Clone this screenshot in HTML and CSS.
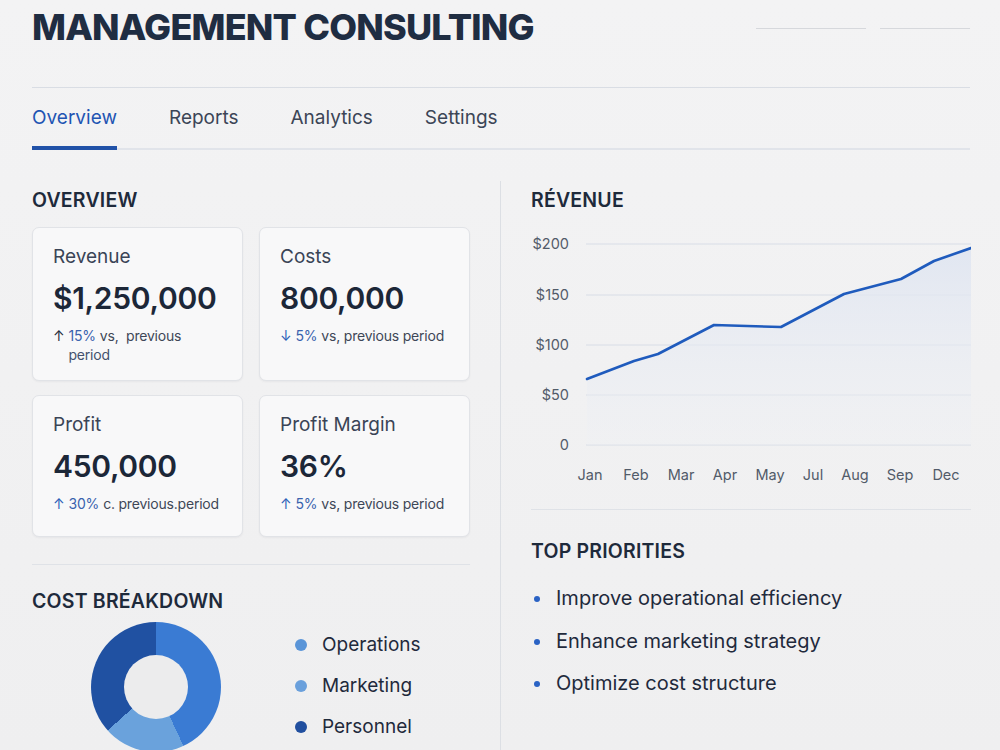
FILE: index.html
```html
<!DOCTYPE html>
<html lang="en">
<head>
    <meta charset="UTF-8">
    <meta name="viewport" content="width=device-width, initial-scale=1.0">
    <title>Management Consulting</title>
    <link rel="stylesheet" href="styles.css">
</head>
<body>

<div class="page">
    <header class="top">
        <h1>MANAGEMENT CONSULTING</h1>
        <div class="top-marks"><span></span><span></span></div>
    </header>

    <nav class="tabs">
        <a class="tab active" href="#">Overview</a>
        <a class="tab" href="#">Reports</a>
        <a class="tab" href="#">Analytics</a>
        <a class="tab" href="#">Settings</a>
    </nav>

    <main class="cols">
        <section class="col col-left">
            <h2 class="section-title">OVERVIEW</h2>
            <div class="cards">
                <div class="card">
                    <div class="card-label">Revenue</div>
                    <div class="card-value">$1,250,000</div>
                    <div class="card-change"><span class="arrow dark">&#8593;</span><span class="change-text"><span class="pct">15%</span>vs,&nbsp; previous<br><span class="pct soft">period</span></span></div>
                </div>
                <div class="card">
                    <div class="card-label">Costs</div>
                    <div class="card-value">800,000</div>
                    <div class="card-change"><span class="arrow">&#8595;</span><span class="change-text"><span class="pct">5%</span>vs, previous period</span></div>
                </div>
                <div class="card">
                    <div class="card-label">Profit</div>
                    <div class="card-value">450,000</div>
                    <div class="card-change"><span class="arrow">&#8593;</span><span class="change-text"><span class="pct">30%</span>c. previous.period</span></div>
                </div>
                <div class="card">
                    <div class="card-label">Profit Margin</div>
                    <div class="card-value">36%</div>
                    <div class="card-change"><span class="arrow">&#8593;</span><span class="change-text"><span class="pct">5%</span>vs, previous period</span></div>
                </div>
            </div>

            <div class="breakdown">
                <h2 class="section-title">COST BRÉAKDOWN</h2>
                <div class="breakdown-body">
                    <div class="donut"></div>
                    <ul class="legend">
                        <li><span class="dot ops"></span>Operations</li>
                        <li><span class="dot mkt"></span>Marketing</li>
                        <li><span class="dot pers"></span>Personnel</li>
                    </ul>
                </div>
            </div>
        </section>

        <section class="col col-right">
            <h2 class="section-title">RÉVENUE</h2>
            <svg class="chart" width="440" height="262" viewBox="0 0 440 262">
                <defs>
                    <linearGradient id="areaFill" x1="0" y1="0" x2="0" y2="1">
                        <stop offset="0" stop-color="#dfe5f1" stop-opacity="0.9"/>
                        <stop offset="1" stop-color="#eef0f4" stop-opacity="0.3"/>
                    </linearGradient>
                </defs>
                <g class="grid">
                    <line x1="55" y1="13" x2="440" y2="13"/>
                    <line x1="55" y1="64" x2="440" y2="64"/>
                    <line x1="55" y1="114" x2="440" y2="114"/>
                    <line x1="55" y1="164" x2="440" y2="164"/>
                    <line x1="55" y1="214" x2="440" y2="214"/>
                </g>
                <g class="y-labels">
                    <text x="38" y="18">$200</text>
                    <text x="38" y="69">$150</text>
                    <text x="38" y="119">$100</text>
                    <text x="38" y="169">$50</text>
                    <text x="38" y="219">0</text>
                </g>
                <path class="area" d="M56,148 L103,130 L127,123 L183,94 L250,96 L313,63 L370,48 L403,30 L440,17 L440,214 L56,214 Z"/>
                <polyline class="line" points="56,148 103,130 127,123 183,94 250,96 313,63 370,48 403,30 440,17"/>
                <g class="x-labels">
                    <text x="59" y="249">Jan</text>
                    <text x="105" y="249">Feb</text>
                    <text x="150" y="249">Mar</text>
                    <text x="194" y="249">Apr</text>
                    <text x="239" y="249">May</text>
                    <text x="282" y="249">Jul</text>
                    <text x="324" y="249">Aug</text>
                    <text x="369" y="249">Sep</text>
                    <text x="415" y="249">Dec</text>
                </g>
            </svg>

            <div class="priorities">
                <h2 class="section-title">TOP PRIORITIES</h2>
                <ul class="prio-list">
                    <li>Improve operational efficiency</li>
                    <li>Enhance marketing strategy</li>
                    <li>Optimize cost structure</li>
                </ul>
            </div>
        </section>
    </main>
</div>

</body>
</html>
```

FILE: styles.css
```css
* {
    box-sizing: border-box;
}

body {
    margin: 0;
    background: linear-gradient(180deg, #f3f3f4 0%, #efeff0 100%);
    font-family: Inter, "Noto Sans", sans-serif;
    color: #1e2a3b;
    height: 750px;
    overflow: hidden;
}

.page {
    padding: 0 30px 0 32px;
}

/* header */
.top {
    display: flex;
    justify-content: space-between;
    height: 88px;
    border-bottom: 1px solid #d9dde4;
}

.top h1 {
    margin: 7px 0 0;
    font-size: 36px;
    font-weight: 800;
    letter-spacing: -0.8px;
    line-height: 40px;
    color: #1f2d42;
}

.top-marks {
    display: flex;
    gap: 14px;
    margin-top: 28px;
}

.top-marks span {
    display: block;
    width: 110px;
    height: 1px;
    background: #d6d8dc;
}

.top-marks span + span {
    width: 90px;
}

/* tabs */
.tabs {
    display: flex;
    gap: 52px;
    height: 62px;
    border-bottom: 2px solid #e1e4ea;
}

.tab {
    display: block;
    padding-top: 18px;
    font-size: 19px;
    color: #3b4556;
    text-decoration: none;
    position: relative;
}

.tab.active {
    color: #1f55b3;
}

.tab.active::after {
    content: "";
    position: absolute;
    left: 0;
    right: 0;
    bottom: -2px;
    height: 4px;
    background: #2152a8;
}

/* two columns */
.cols {
    display: grid;
    grid-template-columns: 469px 1fr;
    margin-top: 31px;
}

.col-left {
    padding-right: 30px;
    border-right: 1px solid #dcdfe4;
    height: 570px;
}

.col-right {
    padding-left: 30px;
}

.section-title {
    margin: 8px 0 0;
    font-size: 19.5px;
    font-weight: 600;
    letter-spacing: 0.2px;
    line-height: 22px;
    color: #1e2a3b;
}

/* metric cards */
.cards {
    display: grid;
    grid-template-columns: 211px 211px;
    grid-template-rows: 154px 142px;
    gap: 14px 16px;
    margin-top: 16px;
}

.card {
    padding: 17px 10px 0 20px;
    background: #f8f8f9;
    border: 1px solid #e1e3e7;
    border-radius: 7px;
    box-shadow: 0 1px 2px rgba(30, 40, 60, 0.05);
}

.card-label {
    font-size: 19px;
    color: #3a4456;
    line-height: 24px;
}

.card-value {
    margin-top: 11px;
    font-size: 30px;
    font-weight: 600;
    line-height: 36px;
    color: #1c2738;
    letter-spacing: -0.3px;
}

.card-change {
    display: flex;
    margin-top: 10px;
    font-size: 14px;
    line-height: 19px;
    letter-spacing: -0.2px;
    color: #3e4757;
}

.arrow {
    color: #2a5fb8;
    margin-right: 4px;
}

.arrow.dark {
    color: #1e2a3b;
}

.pct {
    color: #3a63ae;
    margin-right: 4px;
}

.pct.soft {
    color: #44526d;
}

/* cost breakdown */
.breakdown {
    margin-top: 27px;
    padding-top: 17px;
    border-top: 1px solid #dfe2e7;
}

.breakdown-body {
    display: flex;
    align-items: flex-start;
}

.donut {
    position: relative;
    width: 130px;
    height: 130px;
    margin: 10px 0 0 59px;
    border-radius: 50%;
    background: conic-gradient(#3a7bd3 0deg 155deg, #6aa2dc 155deg 228deg, #2051a2 228deg 360deg);
}

.donut::after {
    content: "";
    position: absolute;
    left: 33px;
    top: 33px;
    width: 64px;
    height: 64px;
    border-radius: 50%;
    background: #ececed;
}

.legend {
    list-style: none;
    margin: 12px 0 0 74px;
    padding: 0;
}

.legend li {
    display: flex;
    align-items: center;
    height: 41px;
    font-size: 19px;
    color: #1f2a3c;
}

.dot {
    width: 12px;
    height: 12px;
    border-radius: 50%;
    margin-right: 15px;
}

.dot.ops {
    background: #5a95d8;
}

.dot.mkt {
    background: #6aa0dc;
}

.dot.pers {
    background: #214f9f;
}

/* revenue chart */
.chart {
    display: block;
    margin-top: 20px;
}

.grid line {
    stroke: #d8dde6;
    stroke-width: 1;
}

.y-labels text {
    font-family: Inter, sans-serif;
    font-size: 14.5px;
    fill: #525b69;
    text-anchor: end;
}

.x-labels text {
    font-family: Inter, sans-serif;
    font-size: 14.5px;
    fill: #525b69;
    text-anchor: middle;
}

.area {
    fill: url(#areaFill);
}

.line {
    fill: none;
    stroke: #1f5bbd;
    stroke-width: 2.6;
    stroke-linejoin: round;
    stroke-linecap: round;
}

/* priorities */
.priorities {
    margin-top: 16px;
    padding-top: 22px;
    border-top: 1px solid #dfe2e7;
}

.prio-list {
    list-style: none;
    margin: 24px 0 0;
    padding: 0;
}

.prio-list li {
    position: relative;
    padding-left: 25px;
    height: 42.5px;
    font-size: 20px;
    color: #1f2a3c;
}

.prio-list li::before {
    content: "";
    position: absolute;
    left: 3px;
    top: 10px;
    width: 6px;
    height: 6px;
    border-radius: 50%;
    background: #2a62c4;
}
```
